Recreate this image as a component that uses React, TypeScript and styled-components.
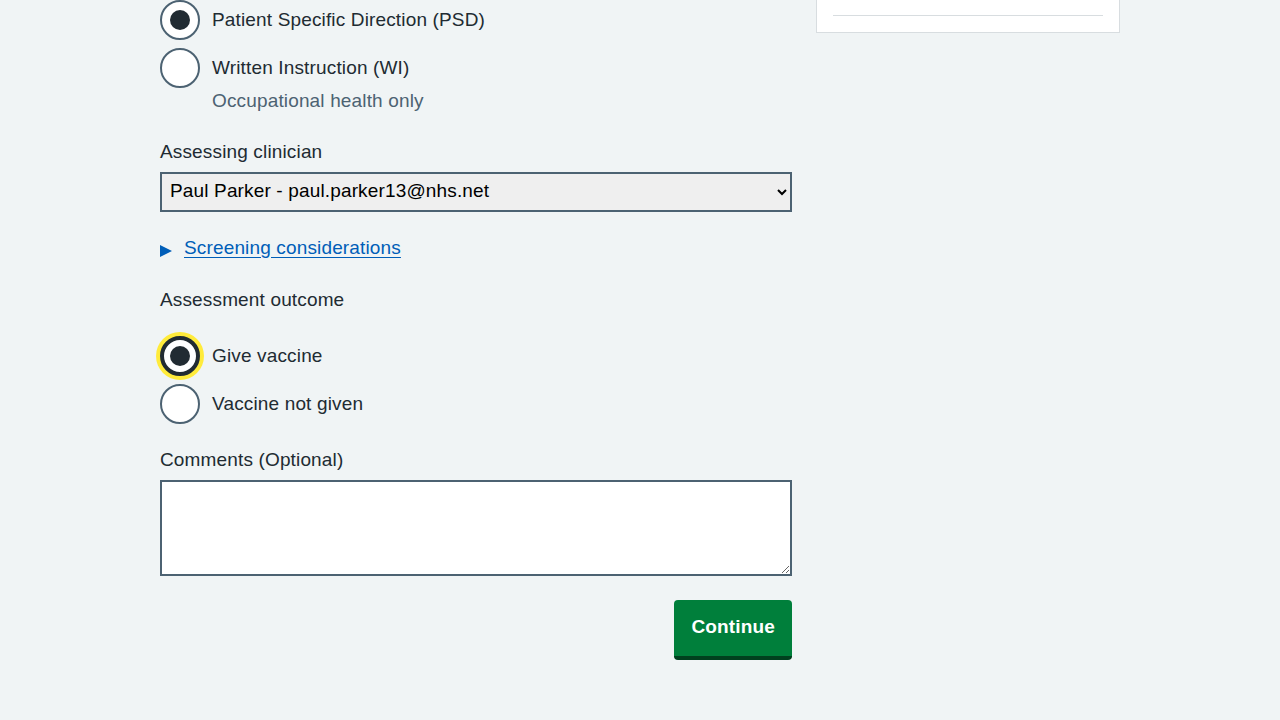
import React from "react";
import styled, { createGlobalStyle } from "styled-components";

const GlobalStyle = createGlobalStyle`
  html, body { margin: 0; padding: 0; }
  body {
    background: #f0f4f5;
    color: #212b32;
    font-family: "Liberation Sans", Arial, sans-serif;
    font-size: 19px;
    line-height: 28px;
    -webkit-font-smoothing: antialiased;
  }
`;

const Container = styled.div`
  width: 960px;
  margin: 0 auto;
  display: grid;
  grid-template-columns: 632px 304px;
  column-gap: 24px;
  align-items: start;
`;

const Main = styled.main`
  display: flex;
  flex-direction: column;
  letter-spacing: 0.15px;
`;

const RadioList = styled.div`
  display: flex;
  flex-direction: column;
  gap: 8px;
`;

const RadioItem = styled.label`
  display: grid;
  grid-template-columns: 40px 1fr;
  column-gap: 12px;
  cursor: pointer;
`;

const RadioCircle = styled.span<{ $checked?: boolean; $focused?: boolean }>`
  width: 40px;
  height: 40px;
  box-sizing: border-box;
  border-radius: 50%;
  background: #ffffff;
  border: ${(p) => (p.$focused ? "4px solid #212b32" : "2px solid #4c6272")};
  box-shadow: ${(p) => (p.$focused ? "0 0 0 4px #ffeb3b" : "none")};
  display: flex;
  align-items: center;
  justify-content: center;

  &::after {
    content: "";
    display: ${(p) => (p.$checked ? "block" : "none")};
    width: 20px;
    height: 20px;
    border-radius: 50%;
    background: #212b32;
  }
`;

const RadioText = styled.span`
  display: flex;
  flex-direction: column;
`;

const RadioLabel = styled.span`
  padding: 6px 0;
  line-height: 28px;
`;

const Hint = styled.span`
  color: #4c6272;
  line-height: 24px;
  padding-top: 1px;
`;

const FieldLabel = styled.label<{ $top: number }>`
  display: block;
  margin-top: ${(p) => p.$top}px;
  margin-bottom: 6px;
  line-height: 28px;
`;

const Select = styled.select`
  width: 632px;
  height: 40px;
  box-sizing: border-box;
  border: 2px solid #4c6272;
  border-radius: 0;
  background-color: #efefef;
  color: #000000;
  font-family: "Liberation Sans", Arial, sans-serif;
  font-size: 19px;
  letter-spacing: 0.15px;
  padding: 0 4px 3px 4px;
  margin: 0;
`;

const Details = styled.details`
  margin-top: 22px;
`;

const Summary = styled.summary`
  list-style: none;
  display: flex;
  align-items: center;
  gap: 12px;
  color: #005eb8;
  line-height: 28px;
  cursor: pointer;

  &::-webkit-details-marker { display: none; }
`;

const Triangle = styled.span`
  width: 0;
  height: 0;
  border-top: 6px solid transparent;
  border-bottom: 6px solid transparent;
  border-left: 12px solid #005eb8;
  margin-top: 5px;
`;

const SummaryText = styled.span`
  text-decoration: underline;
  text-underline-offset: 3px;
`;

const Legend = styled.div`
  margin-top: 24px;
  margin-bottom: 22px;
  line-height: 28px;
`;

const TextArea = styled.textarea`
  display: block;
  width: 632px;
  height: 96px;
  box-sizing: border-box;
  border: 2px solid #4c6272;
  border-radius: 0;
  background: #ffffff;
  margin: 0;
  font-family: "Liberation Sans", Arial, sans-serif;
  font-size: 19px;
`;

const Actions = styled.div`
  display: flex;
  justify-content: flex-end;
  margin-top: 24px;
`;

const Button = styled.button`
  appearance: none;
  height: 60px;
  box-sizing: border-box;
  padding: 0 17px 2px;
  border: 0;
  border-bottom: 4px solid #00401e;
  border-radius: 4px;
  background: #007f3b;
  color: #ffffff;
  font-family: "Liberation Sans", Arial, sans-serif;
  font-size: 19px;
  font-weight: 700;
  letter-spacing: 0.15px;
  line-height: 28px;
  cursor: pointer;
`;

const SideCard = styled.aside`
  background: #ffffff;
  border: 1px solid #d8dde0;
  border-top: none;
  padding: 15px 16px 16px;
`;

const Divider = styled.hr`
  margin: 0;
  border: 0;
  border-top: 1px solid #d8dde0;
`;

export default function App() {
  return (
    <>
      <GlobalStyle />
      <Container>
        <Main>
          <RadioList>
            <RadioItem>
              <RadioCircle $checked />
              <RadioText>
                <RadioLabel>Patient Specific Direction (PSD)</RadioLabel>
              </RadioText>
            </RadioItem>
            <RadioItem>
              <RadioCircle />
              <RadioText>
                <RadioLabel>Written Instruction (WI)</RadioLabel>
                <Hint>Occupational health only</Hint>
              </RadioText>
            </RadioItem>
          </RadioList>

          <FieldLabel $top={25} htmlFor="clinician">Assessing clinician</FieldLabel>
          <Select id="clinician" defaultValue="paul">
            <option value="paul">Paul Parker - paul.parker13@nhs.net</option>
          </Select>

          <Details>
            <Summary>
              <Triangle />
              <SummaryText>Screening considerations</SummaryText>
            </Summary>
          </Details>

          <Legend>Assessment outcome</Legend>
          <RadioList>
            <RadioItem>
              <RadioCircle $checked $focused />
              <RadioText>
                <RadioLabel>Give vaccine</RadioLabel>
              </RadioText>
            </RadioItem>
            <RadioItem>
              <RadioCircle />
              <RadioText>
                <RadioLabel>Vaccine not given</RadioLabel>
              </RadioText>
            </RadioItem>
          </RadioList>

          <FieldLabel $top={22} htmlFor="comments">Comments (Optional)</FieldLabel>
          <TextArea id="comments" />

          <Actions>
            <Button type="button">Continue</Button>
          </Actions>
        </Main>
        <SideCard>
          <Divider />
        </SideCard>
      </Container>
    </>
  );
}
